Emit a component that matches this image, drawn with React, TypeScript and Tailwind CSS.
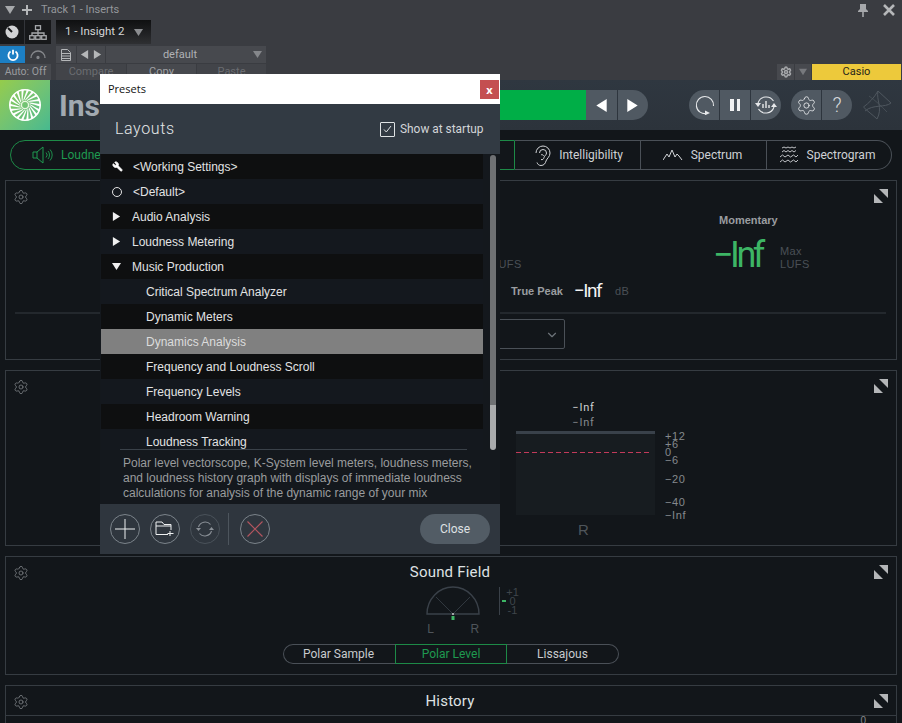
import { ChevronDown, Settings, Wrench } from "lucide-react";
import type { ReactNode } from "react";

/* small drawn bits */

function Tri({ dir, size = 8, color = "#a6a8ab" }: { dir: "r" | "l" | "d"; size?: number; color?: string }) {
  const pts = dir === "r" ? "1,0 9,5 1,10" : dir === "l" ? "9,0 1,5 9,10" : "0,1 10,1 5,9";
  return (
    <svg width={size} height={size} viewBox="0 0 10 10" className="shrink-0">
      <polygon points={pts} fill={color} />
    </svg>
  );
}

function Expand() {
  return (
    <svg width="14" height="14" viewBox="0 0 14 14" className="absolute right-[8px] top-[8px]">
      <polygon points="5,0 14,0 14,9" fill="#b4b6b8" />
      <polygon points="0,5 0,14 9,14" fill="#b4b6b8" />
    </svg>
  );
}

function PanelGear() {
  return <Settings size={16} strokeWidth={1.1} className="absolute left-[7px] top-[8px] text-[#85898d]" />;
}

function Turbine() {
  const blades = Array.from({ length: 18 }, (_, i) => i * 20);
  return (
    <svg width="34" height="34" viewBox="0 0 34 34">
      <circle cx="17" cy="17" r="15.2" fill="none" stroke="#fff" strokeWidth="1.6" />
      {blades.map((a) => (
        <path
          key={a}
          d="M17 12 C19 9 22 6 24 3 L26 4.5 C23 7 20 10 17.5 12.5 Z"
          fill="#fff"
          transform={`rotate(${a} 17 17)`}
        />
      ))}
      <circle cx="17" cy="17" r="3.6" fill="none" stroke="#e8f7e0" strokeWidth="1.4" />
    </svg>
  );
}

function RoundBtn({ children, dim }: { children: ReactNode; dim?: boolean }) {
  return (
    <button
      className={
        "w-[30px] h-[30px] rounded-full border flex items-center justify-center " +
        (dim ? "border-[#4a525a]" : "border-[#7b838a]")
      }
    >
      {children}
    </button>
  );
}

/* host strip */

function HostBar() {
  return (
    <div className="h-[80px] bg-[#3a3c41] font-['Roboto'] text-[11px] text-[#94979b]">
      <div className="h-[20px] flex items-center pl-[5px] pr-[7px]">
        <Tri dir="d" size={10} color="#a6a8ab" />
        <svg width="12" height="12" viewBox="0 0 12 12" className="ml-[6px]">
          <path d="M6 1v10M1 6h10" stroke="#b5b7b9" strokeWidth="2" />
        </svg>
        <span className="ml-[8px] mt-[1px]">Track 1 - Inserts</span>
        <svg width="12" height="14" viewBox="0 0 12 14" className="ml-auto mr-[14px]">
          <path d="M3 1h6v5l2 2v1H1V8l2-2zM5.2 9h1.6v5H5.2z" fill="#a6a8ab" />
        </svg>
        <svg width="12" height="12" viewBox="0 0 12 12">
          <path d="M1 1l10 10M11 1L1 11" stroke="#b5b7b9" strokeWidth="2.6" />
        </svg>
      </div>
      <div className="h-[24px] flex">
        <div className="w-[51px] bg-[#17181a] flex">
          <div className="w-[25px] flex items-center justify-center border-r border-[#33353a]">
            <svg width="14" height="14" viewBox="0 0 14 14">
              <circle cx="7" cy="7" r="6.5" fill="#d2d3d5" />
              <path d="M7 7L3 3" stroke="#17181a" strokeWidth="2" />
            </svg>
          </div>
          <div className="flex-1 flex items-center justify-center">
            <svg width="18" height="15" viewBox="0 0 18 15" fill="none" stroke="#a6a8ab" strokeWidth="1.3">
              <path d="M9 5v3M3 11V8h12v3M9 8v3" />
              <rect x="6.5" y="0.7" width="5" height="4" />
              <rect x="0.7" y="10.7" width="4.5" height="3.6" />
              <rect x="6.7" y="10.7" width="4.5" height="3.6" />
              <rect x="12.7" y="10.7" width="4.5" height="3.6" />
            </svg>
          </div>
        </div>
        <div className="ml-[5px] w-[95px] bg-gradient-to-b from-[#0f1011] to-[#2f3033] flex items-center pl-[9px] text-[11.5px] text-[#d4d5d6]">
          <span>1 - Insight 2</span>
          <span className="ml-[10px]">
            <Tri dir="d" size={9} color="#8b8d90" />
          </span>
        </div>
      </div>
      <div className="mt-[2px] h-[17px] flex">
        <div className="w-[25px] bg-[#1c7fc4] flex items-center justify-center">
          <svg width="12" height="12" viewBox="0 0 12 12" fill="none" stroke="#fff" strokeWidth="1.8">
            <path d="M3.5 2.6a4.6 4.6 0 1 0 5 0M6 0.8v4.6" />
          </svg>
        </div>
        <div className="w-[26px] flex items-center justify-center">
          <svg width="16" height="10" viewBox="0 0 16 10" fill="none" stroke="#85878b" strokeWidth="1.3">
            <path d="M1 8a7 7 0 0 1 14 0" />
            <circle cx="8" cy="7.5" r="1" fill="#85878b" />
          </svg>
        </div>
        <div className="ml-[5px] w-[20px] bg-[#47494e] flex items-center justify-center">
          <svg width="10" height="12" viewBox="0 0 10 12" fill="none" stroke="#b5b7b9" strokeWidth="1">
            <path d="M0.5 0.5h6l3 3v8h-9zM0.5 4.5h9M0.5 7h9M0.5 9.5h9" />
          </svg>
        </div>
        <div className="ml-[1px] w-[28px] bg-[#47494e] flex items-center justify-center gap-[4px]">
          <Tri dir="l" size={9} color="#b5b7b9" />
          <Tri dir="r" size={9} color="#b5b7b9" />
        </div>
        <div className="ml-[1px] w-[160px] bg-[#47494e] flex items-center relative text-[#b0b2b5]">
          <span className="flex-1 text-center pr-[12px] pt-[1px]">default</span>
          <span className="absolute right-[4px]">
            <Tri dir="d" size={9} color="#85878b" />
          </span>
        </div>
      </div>
      <div className="mt-[1px] h-[16px] flex text-[#6b6d71]">
        <div className="w-[51px] bg-[#47494e] flex items-center justify-center text-[#9a9c9f] text-[10.5px]">Auto: Off</div>
        <div className="ml-[5px] w-[70px] bg-[#424449] flex items-center justify-center">Compare</div>
        <div className="ml-[1px] w-[69px] bg-[#47494e] flex items-center justify-center text-[#a0a2a5]">Copy</div>
        <div className="ml-[1px] w-[69px] bg-[#424449] flex items-center justify-center">Paste</div>
        <div className="ml-auto flex mr-[1px]">
          <div className="w-[17px] bg-[#47494e] flex items-center justify-center">
            <Settings size={12} strokeWidth={3} className="text-[#a6a8ab]" />
          </div>
          <div className="ml-[1px] w-[16px] bg-[#47494e] flex items-center justify-center">
            <Tri dir="d" size={8} color="#77797d" />
          </div>
          <div className="ml-[1px] w-[89px] bg-[#edc93b] flex items-center justify-center text-[#26241a] text-[11px]">Casio</div>
        </div>
      </div>
    </div>
  );
}

/* plugin header with transport */

function PluginHeader() {
  return (
    <div className="h-[50px] bg-gradient-to-b from-[#2f3740] to-[#2c333b] flex items-center font-['Roboto']">
      <div className="w-[50px] h-[50px] bg-gradient-to-br from-[#95cc4a] to-[#46b98f] flex items-center justify-center">
        <Turbine />
      </div>
      <span className="ml-[9px] text-[30px] font-bold text-[#a2a9b0]">Insight</span>
      <div className="ml-auto w-[120px] h-[30px] bg-[#00ae47]" />
      <div className="w-[62px] h-[30px] flex rounded-r-full overflow-hidden">
        <div className="w-[31px] bg-[#505962] flex items-center justify-center">
          <Tri dir="l" size={13} color="#fff" />
        </div>
        <div className="ml-[1px] w-[30px] bg-[#505962] flex items-center justify-center pr-[2px]">
          <Tri dir="r" size={13} color="#fff" />
        </div>
      </div>
      <div className="ml-[41px] w-[92px] h-[30px] flex rounded-full overflow-hidden">
        <div className="w-[30px] bg-[#505962] flex items-center justify-center pl-[2px]">
          <svg width="20" height="20" viewBox="0 0 20 20" fill="none" stroke="#e6e8ea" strokeWidth="1.1">
            <path d="M12 18.4A8.6 8.6 0 1 1 18.5 11" />
            <polygon points="10,15.5 15,18 10,20.2" fill="#e6e8ea" stroke="none" />
          </svg>
        </div>
        <div className="ml-[1px] w-[30px] bg-[#505962] flex items-center justify-center gap-[3px]">
          <div className="w-[3.5px] h-[12px] bg-[#f0f1f2]" />
          <div className="w-[3.5px] h-[12px] bg-[#f0f1f2]" />
        </div>
        <div className="ml-[1px] flex-1 bg-[#505962] flex items-center justify-center">
          <svg width="22" height="20" viewBox="0 0 22 20" fill="none" stroke="#e6e8ea" strokeWidth="1.1">
            <path d="M3 8a8.6 8.6 0 0 1 15.5-2M19 12a8.6 8.6 0 0 1-15.5 2" />
            <path d="M8 13V9M11 13V6M14 13v-3" strokeWidth="1.4" />
            <polygon points="0,8 6,8 3,12" fill="#e6e8ea" stroke="none" />
            <polygon points="16,12 22,12 19,8" fill="#e6e8ea" stroke="none" />
          </svg>
        </div>
      </div>
      <div className="ml-[10px] w-[61px] h-[30px] flex rounded-full overflow-hidden">
        <div className="w-[30px] bg-[#505962] flex items-center justify-center pl-[1px]">
          <Settings size={21} strokeWidth={1} className="text-[#e6e8ea]" />
        </div>
        <div className="ml-[1px] flex-1 bg-[#505962] flex items-center justify-center text-[20px] font-light text-[#d8dadc]">?</div>
      </div>
      <svg width="30" height="30" viewBox="0 0 30 30" fill="none" stroke="#4f575f" strokeWidth="1" className="ml-[11px] mr-[9px]">
        <path d="M15 1C13 10 20 18 14 29C10 25 4 21 0.5 17C6 13 11 8 15 1L28 13C22 18 10 14 2 21" />
        <path d="M6 6C12 10 18 16 24 22" strokeWidth="0.7" />
      </svg>
    </div>
  );
}

/* analyzer tabs */

function TabRow() {
  return (
    <div className="h-[50px] pt-[10px] px-[10px] bg-[#12161a] font-['Roboto'] text-[12px] text-[#cfd2d5]">
      <div className="flex h-[30px]">
        <div className="w-[505px] rounded-l-[15px] border border-[#1d8a47] flex items-center pl-[21px] text-[#1f9a50]">
          <svg width="22" height="18" viewBox="0 0 22 18" fill="none" stroke="#1f9a50" strokeWidth="1">
            <path d="M1 6h4l6-5v16l-6-5H1zM5 6v6" />
            <path d="M14 6.5a3.5 3.5 0 0 1 0 5M16 5a6 6 0 0 1 0 8M18 3.5a8 8 0 0 1 0 11" strokeWidth="0.9" />
          </svg>
          <span className="ml-[7px]">Loudness</span>
        </div>
        <div className="w-[126px] border-y border-r border-[#4a5057] flex items-center justify-center gap-[8px] pl-[3px]">
          <svg width="16" height="21" viewBox="0 0 16 21" fill="none" stroke="#d2d5d8" strokeWidth="1">
            <path d="M1 8a7 7 0 0 1 14 0c0 4-3 5-4 8-.6 2.4-2 4.5-5 4.5-2 0-3.2-1-4-3" />
            <path d="M4.5 8a3.5 3.5 0 0 1 7 0c0 2-2 2.5-2.5 4.5S7.5 15 6 14.5M6 10a1.5 1.5 0 0 1 2.5 1" />
          </svg>
          <span>Intelligibility</span>
        </div>
        <div className="w-[126px] border-y border-r border-[#4a5057] flex items-center justify-center gap-[8px] pr-[2px]">
          <svg width="20" height="12" viewBox="0 0 20 12" fill="none" stroke="#d2d5d8" strokeWidth="1">
            <path d="M0 11L4 5l2 3 3-7 3 7 2-3 2 2 3 4" />
          </svg>
          <span>Spectrum</span>
        </div>
        <div className="flex-1 rounded-r-[15px] border-y border-r border-[#4a5057] flex items-center justify-center gap-[8px] pr-[4px]">
          <svg width="20" height="18" viewBox="0 0 20 18" fill="none" stroke="#d2d5d8" strokeWidth="0.9">
            <path d="M3 2l2-1 2 1 2-1 2 1 2-1 2 1 2-1M3 6l2-1.5 2 1.5 2-1.5 2 1.5 2-1.5 2 1.5 2-1.5M1 11l2.5-2 2.5 2 3-2 2.5 2 3-2 2.5 2L19 9M1 16l2.5-2 2.5 2 3-2 2.5 2 3-2 2.5 2 2-2" />
          </svg>
          <span>Spectrogram</span>
        </div>
      </div>
    </div>
  );
}

/* meter panels */

function LoudnessPanel() {
  return (
    <section className="relative h-[180px] mx-[5px] border border-[#363c42]">
      <PanelGear />
      <Expand />
      <div className="h-[131px] flex pl-[494px]">
        <div className="w-[215px] pt-[76px]">
          <div className="-ml-[8px] text-[11px] leading-[14px] tracking-[0.4px] text-[#4a5056]">LUFS</div>
          <div className="mt-[10px] h-[20px] pl-[11px] flex items-center">
            <span className="text-[11px] font-bold text-[#9a9da0] w-[64px]">True Peak</span>
            <span className="font-['Roboto'] text-[19px] tracking-[-1.5px] -ml-[1px] mr-[1px] text-[#f2f3f4] w-[40px]">−Inf</span>
            <span className="text-[11px] tracking-[0.4px] text-[#4a5056]">dB</span>
          </div>
        </div>
        <div className="pt-[32px]">
          <div className="pl-[4px] text-[11px] leading-[14px] font-bold text-[#9a9da0]">Momentary</div>
          <div className="mt-[10px] h-[36px] flex items-center">
            <span className="font-['Roboto'] text-[36px] leading-[36px] tracking-[-3.5px] -ml-[2px] text-[#3db565] w-[67px]">−Inf</span>
            <div className="mt-[5px] text-[11px] leading-[13px] tracking-[0.4px] text-[#4a5056]">
              <div>Max</div>
              <div>LUFS</div>
            </div>
          </div>
        </div>
      </div>
      <div className="ml-[9px] mr-[10px] h-[2px] bg-[#23282d]" />
      <div className="mt-[5px] w-[229px] h-[30px] ml-[330px] border border-[#4a5057] rounded-[2px] flex items-center justify-end pr-[5px] pt-[2px]">
        <ChevronDown size={14} strokeWidth={2} className="text-[#6d7379]" />
      </div>
    </section>
  );
}

const SCALE = [
  { t: "+12", c: "top-[-1px]" },
  { t: "+6", c: "top-[7px]" },
  { t: "0", c: "top-[15px]" },
  { t: "−6", c: "top-[23px]" },
  { t: "−20", c: "top-[42px]" },
  { t: "−40", c: "top-[65px]" },
  { t: "−Inf", c: "top-[78px]" },
];

function LevelPanel() {
  return (
    <section className="relative h-[176px] mt-[10px] mx-[5px] border border-[#363c42]">
      <PanelGear />
      <Expand />
      <div className="pl-[510px] pt-[29px] flex">
        <div className="w-[139px]">
          <div className="pr-[4px] text-center font-['Roboto'] text-[11px] leading-[15px] tracking-[0.8px] text-[#d0d2d4]">−Inf</div>
          <div className="pr-[4px] text-center font-['Roboto'] text-[11px] leading-[15px] tracking-[0.8px] text-[#85898d]">−Inf</div>
          <div className="mt-[1px] h-[84px] bg-[#171c20] relative">
            <div className="h-[3px] bg-[#39414a]" />
            <div className="absolute left-0 right-[3px] top-[21px] h-px bg-[repeating-linear-gradient(90deg,#c23a5a_0,#c23a5a_5px,transparent_5px,transparent_8px)]" />
          </div>
          <div className="mt-[6px] pr-[4px] text-center text-[15px] leading-[18px] text-[#4f555b]">R</div>
        </div>
        <div className="ml-[10px] mt-[31px] relative w-[30px] h-[84px] text-[11px] leading-[12px] tracking-[0.6px] text-[#85898d]">
          {SCALE.map((s) => (
            <span key={s.t} className={"absolute left-0 " + s.c}>
              {s.t}
            </span>
          ))}
        </div>
      </div>
    </section>
  );
}

function SoundFieldPanel() {
  return (
    <section className="relative h-[119px] mt-[10px] mx-[5px] border border-[#363c42] flex flex-col items-center">
      <PanelGear />
      <Expand />
      <h2 className="mt-[5px] pr-[2px] font-['Roboto'] text-[15px] tracking-[0.2px] leading-[20px] text-[#dfe1e3]">Sound Field</h2>
      <div className="mt-[3px] pl-[40px] flex">
        <div className="w-[60px]">
          <svg width="60" height="37" viewBox="0 0 60 37" fill="none" className="block">
            <path d="M4 29A26 27 0 0 1 56 29Z" stroke="#3a4149" strokeWidth="1.4" />
            <path d="M30 29L13 12M30 29L47 12" stroke="#3a4149" strokeWidth="0.8" />
            <circle cx="30" cy="29" r="0.9" fill="#d8dadc" />
            <rect x="28.5" y="31" width="3" height="4" fill="#3db565" />
          </svg>
          <div className="px-[4px] flex justify-between text-[12px] leading-[14px] text-[#4f555b]">
            <span>L</span>
            <span>R</span>
          </div>
        </div>
        <div className="ml-[16px] mt-[2px] h-[28px] flex border-l border-[#3a4149]">
          <div className="w-[6px] flex items-center pl-[2px]">
            <div className="w-[4px] h-[2px] bg-[#3db565]" />
          </div>
          <div className="text-[11px] leading-[9px] pt-[1px] text-[#3f454b] text-center">
            <div>+1</div>
            <div>0</div>
            <div>-1</div>
          </div>
        </div>
      </div>
      <div className="mt-[8px] w-[336px] h-[20px] flex font-['Roboto'] text-[12px] text-[#c8cbce]">
        <div className="w-[112px] rounded-l-full border border-r-0 border-[#4a5057] flex items-center justify-center pr-[2px]">Polar Sample</div>
        <div className="w-[112px] border border-[#1d8a47] text-[#1f9a50] flex items-center justify-center">Polar Level</div>
        <div className="w-[112px] rounded-r-full border border-l-0 border-[#4a5057] flex items-center justify-center">Lissajous</div>
      </div>
    </section>
  );
}

function HistoryPanel() {
  return (
    <section className="relative mt-[10px] mx-[5px] h-[60px] border border-[#363c42]">
      <PanelGear />
      <Expand />
      <h2 className="mt-[5px] pr-[2px] text-center font-['Roboto'] text-[15px] tracking-[0.2px] leading-[20px] text-[#dfe1e3]">History</h2>
      <div className="mt-[4px] border-t border-[#363c42] flex justify-end pr-[30px]">
        <span className="text-[10px] leading-[10px] text-[#85898d]">0</span>
      </div>
    </section>
  );
}

/* presets dialog */

type Row = { label: string; icon?: "wrench" | "circle" | "right" | "down"; selected?: boolean };

const ROWS: Row[] = [
  { label: "<Working Settings>", icon: "wrench" },
  { label: "<Default>", icon: "circle" },
  { label: "Audio Analysis", icon: "right" },
  { label: "Loudness Metering", icon: "right" },
  { label: "Music Production", icon: "down" },
  { label: "Critical Spectrum Analyzer" },
  { label: "Dynamic Meters" },
  { label: "Dynamics Analysis", selected: true },
  { label: "Frequency and Loudness Scroll" },
  { label: "Frequency Levels" },
  { label: "Headroom Warning" },
  { label: "Loudness Tracking" },
];

function RowIcon({ icon }: { icon: NonNullable<Row["icon"]> }) {
  if (icon === "wrench") return <Wrench size={11} fill="#fff" strokeWidth={2} className="text-white -scale-x-100" />;
  if (icon === "circle") return <div className="w-[10px] h-[10px] rounded-full border border-[#e4e4e4]" />;
  return <Tri dir={icon === "right" ? "r" : "d"} size={9} color="#f0f0f0" />;
}

function PresetRow({ row, i }: { row: Row; i: number }) {
  const bg = row.selected ? "bg-[#808080]" : i % 2 === 0 ? "bg-[#0e0f10]" : "bg-[#14181e]";
  return (
    <div className={"h-[25px] shrink-0 flex items-center text-[12px] text-[#e2e3e4] " + bg}>
      {row.icon ? (
        <>
          <div className="w-[31px] pl-[11px] flex items-center">
            <RowIcon icon={row.icon} />
          </div>
          <span className={row.icon === "wrench" || row.icon === "circle" ? "ml-[1px]" : ""}>{row.label}</span>
        </>
      ) : (
        <span className={"pl-[45px] " + (row.selected ? "text-[#dcdcdc]" : "")}>{row.label}</span>
      )}
    </div>
  );
}

function PresetsDialog() {
  return (
    <div className="absolute left-[100px] top-[74px] w-[400px] h-[480px] flex flex-col bg-[#14181d]">
      <div className="h-[30px] bg-white flex items-center pl-[8px] pr-[1px] font-['Open_Sans'] text-[11px] text-[#111]">
        <span>Presets</span>
        <button className="ml-auto w-[19px] h-[19px] bg-[#c44f51] text-white text-[11px] font-bold leading-[17px]">x</button>
      </div>
      <div className="h-[50px] bg-[#323a43] flex items-center pl-[15px] pr-[17px] font-['Roboto']">
        <span className="text-[16px] font-light tracking-[0.6px] text-[#e3e6e8]">Layouts</span>
        <div className="ml-auto mr-[1px] w-[15px] h-[15px] border border-[#dfe2e4] rounded-[1px] flex items-center justify-center">
          <svg width="9" height="8" viewBox="0 0 9 8" fill="none" stroke="#dfe2e4" strokeWidth="1">
            <path d="M1 4.5L3.3 7 8 1" />
          </svg>
        </div>
        <span className="ml-[4px] mt-[1px] w-[83px] whitespace-nowrap text-[11.9px] text-[#d2d5d8]">Show at startup</span>
      </div>
      <div className="h-[296px] flex overflow-hidden">
        <div className="w-[382px] ml-[1px] flex flex-col overflow-hidden relative">
          {ROWS.map((r, i) => (
            <PresetRow key={r.label} row={r} i={i} />
          ))}
          <div className="absolute left-[19px] right-[16px] bottom-0 h-px bg-[#3a4149]" />
        </div>
        <div className="flex-1 bg-[#14181d] pl-[7px] pt-[1px]">
          <div className="w-[6px] h-[295px] rounded-full overflow-hidden flex flex-col">
            <div className="h-[250px] bg-[#6f7174]" />
            <div className="flex-1 bg-[#a9abad]" />
          </div>
        </div>
      </div>
      <div className="h-[54px] pl-[23px] pr-[20px] pt-[6px] text-[12px] leading-[15px] text-[#9a9c9e] bg-[#14181d]">
        Polar level vectorscope, K-System level meters, loudness meters, and loudness history graph with displays of immediate loudness calculations for analysis of the dynamic range of your mix
      </div>
      <div className="h-[50px] bg-[#2f363e] flex items-center pl-[10px] pr-[10px] font-['Roboto']">
        <RoundBtn>
          <svg width="20" height="20" viewBox="0 0 20 20" stroke="#eef0f1" strokeWidth="1">
            <path d="M10 0v20M0 10h20" />
          </svg>
        </RoundBtn>
        <div className="ml-[10px]">
          <RoundBtn>
            <svg width="20" height="16" viewBox="0 0 20 16" fill="none" stroke="#eef0f1" strokeWidth="1">
              <path d="M13 13.5H1V1h6l2 2.5h7V9M1 5h15M15 10v5M12.5 12.5h6" />
            </svg>
          </RoundBtn>
        </div>
        <div className="ml-[10px]">
          <RoundBtn dim>
            <svg width="18" height="18" viewBox="0 0 18 18" fill="none" stroke="#8a9097" strokeWidth="1.1">
              <path d="M2.5 7a7 7 0 0 1 12-2.5M15.5 11a7 7 0 0 1-12 2.5" />
              <polygon points="0,8 5,8 2.5,11" fill="#8a9097" stroke="none" />
              <polygon points="13,10 18,10 15.5,7" fill="#8a9097" stroke="none" />
            </svg>
          </RoundBtn>
        </div>
        <div className="ml-[8px] w-px h-[32px] bg-[#4d555d]" />
        <div className="ml-[11px]">
          <RoundBtn>
            <svg width="16" height="16" viewBox="0 0 16 16" stroke="#b3555f" strokeWidth="1.2">
              <path d="M0.5 0.5l15 15M15.5 0.5l-15 15" />
            </svg>
          </RoundBtn>
        </div>
        <button className="ml-auto w-[70px] h-[30px] rounded-full bg-[#525c65] text-[12px] text-[#dfe1e3]">Close</button>
      </div>
    </div>
  );
}

export default function App() {
  return (
    <div className="relative w-[902px] h-[723px] overflow-hidden bg-[#12161a] font-['Liberation_Sans']">
      <HostBar />
      <PluginHeader />
      <TabRow />
      <LoudnessPanel />
      <LevelPanel />
      <SoundFieldPanel />
      <HistoryPanel />
      <PresetsDialog />
    </div>
  );
}
